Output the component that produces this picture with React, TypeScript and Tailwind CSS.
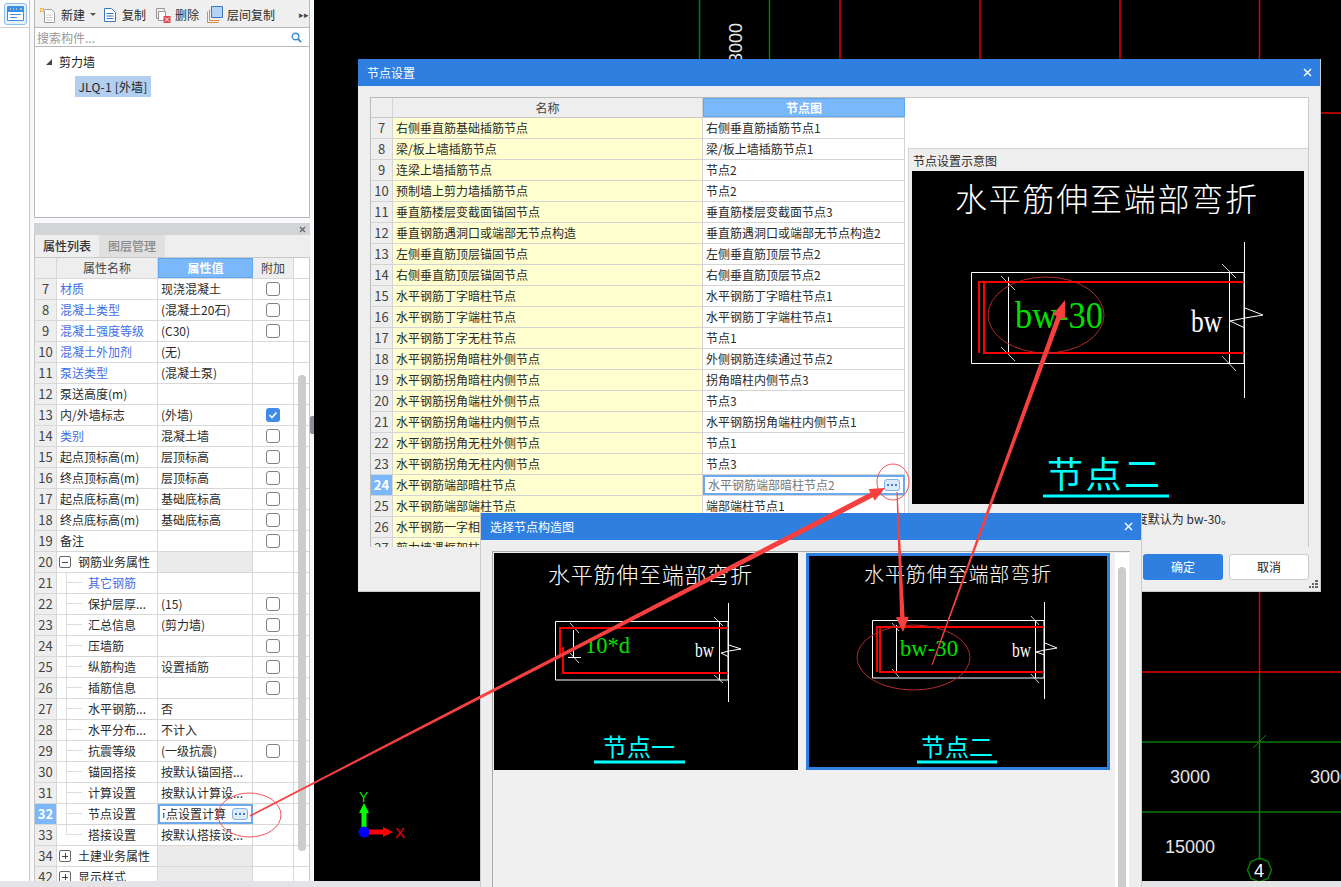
import React from "react";

const UI_FONT = "font-['Noto_Sans_CJK_SC','Liberation_Sans',sans-serif]";

type PropRow = {
  no: number;
  name: string;
  value?: string;
  blue?: boolean;
  check?: boolean;
  checked?: boolean;
  group?: "open" | "closed";
  child?: boolean;
  last?: boolean;
};

const PROP_ROWS: PropRow[] = [
  { no: 7, name: "材质", value: "现浇混凝土", blue: true, check: true },
  { no: 8, name: "混凝土类型", value: "(混凝土20石)", blue: true, check: true },
  { no: 9, name: "混凝土强度等级", value: "(C30)", blue: true, check: true },
  { no: 10, name: "混凝土外加剂", value: "(无)", blue: true },
  { no: 11, name: "泵送类型", value: "(混凝土泵)", blue: true },
  { no: 12, name: "泵送高度(m)" },
  { no: 13, name: "内/外墙标志", value: "(外墙)", check: true, checked: true },
  { no: 14, name: "类别", value: "混凝土墙", blue: true, check: true },
  { no: 15, name: "起点顶标高(m)", value: "层顶标高", check: true },
  { no: 16, name: "终点顶标高(m)", value: "层顶标高", check: true },
  { no: 17, name: "起点底标高(m)", value: "基础底标高", check: true },
  { no: 18, name: "终点底标高(m)", value: "基础底标高", check: true },
  { no: 19, name: "备注", check: true },
  { no: 20, name: "钢筋业务属性", group: "open" },
  { no: 21, name: "其它钢筋", blue: true, child: true },
  { no: 22, name: "保护层厚...", value: "(15)", child: true, check: true },
  { no: 23, name: "汇总信息", value: "(剪力墙)", child: true, check: true },
  { no: 24, name: "压墙筋", child: true, check: true },
  { no: 25, name: "纵筋构造", value: "设置插筋", child: true, check: true },
  { no: 26, name: "插筋信息", child: true, check: true },
  { no: 27, name: "水平钢筋...", value: "否", child: true },
  { no: 28, name: "水平分布...", value: "不计入", child: true },
  { no: 29, name: "抗震等级", value: "(一级抗震)", child: true, check: true },
  { no: 30, name: "锚固搭接", value: "按默认锚固搭...", child: true },
  { no: 31, name: "计算设置", value: "按默认计算设...", child: true },
  { no: 32, name: "节点设置", value: "节点设置计算", child: true },
  { no: 33, name: "搭接设置", value: "按默认搭接设...", child: true, last: true },
  { no: 34, name: "土建业务属性", group: "closed" },
  { no: 42, name: "显示样式", group: "closed" },
];

const NODE_ROWS: [number, string, string][] = [
  [7, "右侧垂直筋基础插筋节点", "右侧垂直筋插筋节点1"],
  [8, "梁/板上墙插筋节点", "梁/板上墙插筋节点1"],
  [9, "连梁上墙插筋节点", "节点2"],
  [10, "预制墙上剪力墙插筋节点", "节点2"],
  [11, "垂直筋楼层变截面锚固节点", "垂直筋楼层变截面节点3"],
  [12, "垂直钢筋遇洞口或端部无节点构造", "垂直筋遇洞口或端部无节点构造2"],
  [13, "左侧垂直筋顶层锚固节点", "左侧垂直筋顶层节点2"],
  [14, "右侧垂直筋顶层锚固节点", "右侧垂直筋顶层节点2"],
  [15, "水平钢筋丁字暗柱节点", "水平钢筋丁字暗柱节点1"],
  [16, "水平钢筋丁字端柱节点", "水平钢筋丁字端柱节点1"],
  [17, "水平钢筋丁字无柱节点", "节点1"],
  [18, "水平钢筋拐角暗柱外侧节点", "外侧钢筋连续通过节点2"],
  [19, "水平钢筋拐角暗柱内侧节点", "拐角暗柱内侧节点3"],
  [20, "水平钢筋拐角端柱外侧节点", "节点3"],
  [21, "水平钢筋拐角端柱内侧节点", "水平钢筋拐角端柱内侧节点1"],
  [22, "水平钢筋拐角无柱外侧节点", "节点1"],
  [23, "水平钢筋拐角无柱内侧节点", "节点3"],
  [24, "水平钢筋端部暗柱节点", "水平钢筋端部暗柱节点2"],
  [25, "水平钢筋端部端柱节点", "端部端柱节点1"],
  [26, "水平钢筋一字相交节点", "节点1"],
  [27, "剪力墙遇框架柱节点", "节点1"],
];

const DotsButton = () => (
  <span className="flex h-[12px] w-[16px] shrink-0 items-center justify-center gap-[2px] rounded-[3px] border border-[#7fb2ea] bg-[#dceafa]">
    <span className="h-[2px] w-[2px] bg-[#3a7fd5]" />
    <span className="h-[2px] w-[2px] bg-[#3a7fd5]" />
    <span className="h-[2px] w-[2px] bg-[#3a7fd5]" />
  </span>
);

const CloseX = () => (
  <svg width="9" height="9" viewBox="0 0 9 9" className="shrink-0">
    <path d="M1 1l7 7M8 1l-7 7" stroke="#fff" strokeWidth="1.4" />
  </svg>
);

const Checkbox = ({ checked }: { checked?: boolean }) =>
  checked ? (
    <span className="flex h-[14px] w-[14px] items-center justify-center rounded-[3px] bg-[#3f8be6]">
      <svg width="10" height="10" viewBox="0 0 10 10">
        <path d="M1.5 5l2.5 2.5L8.5 2.5" fill="none" stroke="#fff" strokeWidth="1.6" />
      </svg>
    </span>
  ) : (
    <span className="h-[14px] w-[14px] rounded-[3px] border border-[#808080] bg-white" />
  );

const PropertyRow = ({ row }: { row: PropRow }) => {
  const selected = row.no === 32;
  return (
    <div className="flex h-[21px] shrink-0 border-b border-[#d8d8d8]">
      <div
        className={
          selected
            ? "flex w-[22px] shrink-0 items-center justify-center border-r border-[#d8d8d8] bg-[#7ab8fb] text-[13px] font-bold text-white"
            : "flex w-[22px] shrink-0 items-center justify-center border-r border-[#d8d8d8] bg-[#eeeeee] text-[13px] text-[#444]"
        }
      >
        {row.no}
      </div>
      <div className="flex w-[101px] shrink-0 items-center overflow-hidden border-r border-[#d8d8d8] bg-white">
        {row.group && (
          <span className="ml-[2px] mr-[7px] flex h-[12px] w-[12px] shrink-0 items-center justify-center rounded-[2px] border border-[#666]">
            <span className="relative block h-px w-[6px] bg-[#444]">
              {row.group === "closed" && (
                <span className="absolute left-[2.5px] top-[-2.5px] block h-[6px] w-px bg-[#444]" />
              )}
            </span>
          </span>
        )}
        {row.child && (
          <span className="ml-[9px] mr-[6px] flex h-full w-[16px] shrink-0 flex-col">
            <span className="h-1/2 border-b border-l border-[#dddddd]" />
            {!row.last && <span className="h-1/2 border-l border-[#dddddd]" />}
          </span>
        )}
        <span
          className={
            (row.group || row.child ? "" : "ml-[3px] ") +
            "whitespace-nowrap " +
            (row.blue ? "text-[#3f6fe8]" : "text-[#2a2a2a]")
          }
        >
          {row.name}
        </span>
      </div>
      {selected ? (
        <div className="flex w-[95px] shrink-0 items-center border-2 border-[#6caaf0] bg-white pl-[3px] pr-[3px]">
          <div className="flex min-w-0 flex-1 justify-end overflow-hidden pr-[6px]">
            <span className="shrink-0 whitespace-nowrap text-[#2a2a2a]">{row.value}</span>
          </div>
          <DotsButton />
        </div>
      ) : (
        <div
          className={
            "flex w-[95px] shrink-0 items-center overflow-hidden whitespace-nowrap border-r border-[#d8d8d8] pl-[3px] text-[#2a2a2a] " +
            (row.group ? "bg-[#ebebeb]" : "bg-white")
          }
        >
          {row.value}
        </div>
      )}
      <div className="flex w-[41px] shrink-0 items-center justify-center border-r border-[#d8d8d8] bg-white">
        {row.check && <Checkbox checked={row.checked} />}
      </div>
    </div>
  );
};

const ToolbarIcons = {
  add: (
    <svg width="16" height="16" viewBox="0 0 16 16">
      <path d="M4.5 2.5h7l3 3v10h-10z" fill="#fff" stroke="#9a9a9a" />
      <path d="M6.5 8h6M6.5 10.5h6M6.5 13h6" stroke="#c8c8c8" />
      <path d="M0 1h4v4H0z" fill="#f5a623" />
      <path d="M2 0v6M0 3h5" stroke="#fff" strokeWidth=".7" />
    </svg>
  ),
  copy: (
    <svg width="14" height="16" viewBox="0 0 14 16">
      <path d="M1.5 1.5h7l4 4v9h-11z" fill="#fff" stroke="#3a76bb" />
      <path d="M3.5 6.5h7M3.5 9h7M3.5 11.5h7" stroke="#3a76bb" />
    </svg>
  ),
  remove: (
    <svg width="16" height="16" viewBox="0 0 16 16">
      <path d="M1.5 1.5h8v2" fill="none" stroke="#999" />
      <path d="M1.5 1.5v10h2" fill="none" stroke="#999" />
      <path d="M3.5 4.5h7v9h-7z" fill="#fff" stroke="#999" />
      <path d="M8.5 9h7v7h-7z" fill="#e0474c" />
      <path d="M10 10.5l4 4M14 10.5l-4 4" stroke="#fff" />
    </svg>
  ),
  floor: (
    <svg width="16" height="17" viewBox="0 0 16 17">
      <path d="M.5 5.5v11h11" fill="none" stroke="#e08a3c" />
      <path d="M2.5 3.5v11h10" fill="none" stroke="#e08a3c" />
      <path d="M4.5.5h11v11h-11z" fill="#b4d2f3" stroke="#3a76bb" />
    </svg>
  ),
};

const Sidebar = () => (
  <aside className={`relative flex h-full w-[314px] shrink-0 bg-[#f8f9fa] text-[12px] ${UI_FONT}`}>
    {/* tab strip */}
    <div className="flex h-full w-[30px] shrink-0 flex-col border-r border-[#c8c8c8] bg-white">
      <div className="flex h-[28px] items-center justify-center border-b border-[#d0d0d0] pl-[1px]">
        <div className="flex h-[22px] w-[23px] items-center justify-center rounded-[3px] border border-[#8dbdf2] bg-[#e4f0fc]">
          <svg width="17" height="15" viewBox="0 0 17 15">
            <path d="M.5.5h16v14H.5z" fill="#fff" stroke="#3f8fe0" />
            <path d="M1 1h15v5H1z" fill="#3f8fe0" />
            <path d="M3 3h1M6 3h1M9 3h1M13 3h2" stroke="#fff" />
            <path d="M3 8.5h11M3 11.5h7" stroke="#3f8fe0" />
          </svg>
        </div>
      </div>
    </div>

    <div className="flex h-full w-[284px] flex-col pl-[4px] pr-[4px]">
      {/* list panel */}
      <div className="flex h-[28px] shrink-0 items-center border-x border-b border-[#b8b8b8] bg-[#efefef] pl-[5px] pt-[2px] text-[#2a2a2a]">
        <span className="mr-[5px]">{ToolbarIcons.add}</span>
        <span>新建</span>
        <span className="ml-[5px] mr-[7px] h-0 w-0 border-x-[3px] border-t-[3px] border-x-transparent border-t-[#555]" />
        <span className="mr-[5px]">{ToolbarIcons.copy}</span>
        <span className="mr-[9px]">复制</span>
        <span className="mr-[4px]">{ToolbarIcons.remove}</span>
        <span className="mr-[8px]">删除</span>
        <span className="mr-[4px]">{ToolbarIcons.floor}</span>
        <span>层间复制</span>
        <span className="ml-[24px] text-[9px] leading-none text-[#444]">▸▸</span>
      </div>
      <div className="flex h-[19px] shrink-0 items-center justify-between border-x border-b border-[#b8b8b8] bg-white pl-[2px] pr-[7px] pt-[1px] text-[#999]">
        <span>搜索构件...</span>
        <svg width="11" height="11" viewBox="0 0 11 11">
          <circle cx="4.5" cy="4.5" r="3.3" fill="none" stroke="#3a8fd0" strokeWidth="1.4" />
          <path d="M7 7l3.2 3.2" stroke="#3a8fd0" strokeWidth="1.8" />
        </svg>
      </div>
      <div className="flex h-[171px] shrink-0 flex-col border-x border-b border-[#b8b8b8] bg-white pl-[11px] pt-[6px] text-[#222]">
        <div className="flex h-[18px] items-center">
          <span className="mr-[7px] h-0 w-0 border-b-[6px] border-l-[6px] border-b-[#444] border-l-transparent" />
          <span>剪力墙</span>
        </div>
        <div className="ml-[29px] mt-[5px] flex h-[21px] w-[76px] items-center justify-center bg-[#b3cff0] whitespace-nowrap tracking-[0.2px]">
          JLQ-1 [外墙]
        </div>
      </div>

      {/* properties panel */}
      <div className="mt-[5px] flex h-[12px] shrink-0 items-center justify-end bg-[#d2d4d8] pr-[4px]">
        <svg width="7" height="7" viewBox="0 0 7 7">
          <path d="M1 1l5 5M6 1L1 6" stroke="#666" strokeWidth="1.3" />
        </svg>
      </div>
      <div className="flex h-[22px] shrink-0 items-stretch border-l border-[#c0c0c0] bg-[#eeeeee]">
        <div className="flex w-[64px] items-center justify-center font-medium text-[#333]">属性列表</div>
        <div className="flex w-[66px] items-center justify-center bg-[#e0e0e0] font-medium text-[#8a8a8a]">图层管理</div>
      </div>
      <div className="relative flex min-h-0 flex-1 flex-col overflow-hidden border-x border-t border-[#c8c8c8] bg-white">
        <div className="flex h-[21px] shrink-0 border-b border-[#d8d8d8] text-[#444]">
          <div className="w-[22px] shrink-0 border-r border-[#d8d8d8] bg-[#eeeeee]" />
          <div className="flex w-[101px] shrink-0 items-center justify-center border-r border-[#d8d8d8] bg-[#eeeeee]">属性名称</div>
          <div className="flex w-[95px] shrink-0 items-center justify-center border border-[#5ea5f2] bg-[#7ab8fb] font-bold text-white">属性值</div>
          <div className="flex w-[41px] shrink-0 items-center justify-center border-r border-[#d8d8d8] bg-[#eeeeee]">附加</div>
        </div>
        {PROP_ROWS.map((row) => (
          <PropertyRow key={row.no} row={row} />
        ))}
        {/* scrollbar */}
        <div className="absolute right-[3px] top-[117px] h-[476px] w-[8px] rounded-[4px] bg-[#cccccc]" />
      </div>
    </div>

    {/* splitter handle */}
    <div className="absolute left-[310px] top-[416px] h-[18px] w-[4px] rounded-l-[2px] bg-[#8a8f96]" />
  </aside>
);

const CanvasLines = () => (
  <svg className="block h-full w-full" viewBox="314 0 1027 881">
    <g stroke="#0a7a0a" strokeWidth="1.5">
      <path d="M699.5 0V100M769.5 0V100" />
      <path d="M1142 742H1341M1142 812H1341M1259.5 672V860" />
      <path d="M1253 748L1266 735" strokeWidth="1" />
      <path d="M1259.5 858l8.5 3.5 3.5 8.5-3.5 8.5-8.5 3.5-8.5-3.5-3.5-8.5 3.5-8.5z" fill="none" />
    </g>
    <g stroke="#e00000" strokeWidth="1.5">
      <path d="M840 0V100M980 0V100M1120 0V100M1259.5 0V672" />
      <path d="M1321 113H1341M1142 672H1341" />
    </g>
    <g fill="#e6e6e6" fontSize="18" fontFamily="'Liberation Sans',sans-serif">
      <text x="742" y="63" transform="rotate(-90 742 63)">3000</text>
      <text x="1170" y="783">3000</text>
      <text x="1310" y="783">3000</text>
      <text x="1165" y="853">15000</text>
      <text x="1254" y="877" fill="#fff">4</text>
    </g>
    {/* axis gizmo */}
    <path d="M361.5 832V813H359L364 803L369 813H366.5V832Z" fill="#00ff00" />
    <path d="M364 829.5H383V827L393 832L383 837V834.5H364Z" fill="#ff0000" />
    <circle cx="364" cy="832" r="5.5" fill="#0000ff" />
    <text x="359" y="802" fill="#00e000" fontSize="14" fontFamily="'Liberation Sans',sans-serif">Y</text>
    <text x="395" y="838" fill="#ff0000" fontSize="15" fontFamily="'Liberation Sans',sans-serif">X</text>
  </svg>
);

const CJK = "'Noto Sans CJK SC',sans-serif";
const SERIF = "'Liberation Serif',serif";

const BigDiagram = () => (
  <svg className="block h-[333px] w-[392px] bg-black" viewBox="912 171 392 333">
    <text x="955" y="211" fill="#fff" fontSize="32" fontFamily={CJK} fontWeight="300" textLength="302">水平筋伸至端部弯折</text>
    <g stroke="#fff" fill="none">
      <path d="M971.5 272.5H1244V363.5H971.5Z" />
      <path d="M1244.5 242V398M1229.5 272V364M1008.5 277V353" />
      <path d="M1222 264L1236 278M1222 356L1236 371M1001 276L1015 290M1001 347L1015 361" strokeWidth=".8" />
      <path d="M1245 308L1263 315L1245 318L1230 321L1245 328" />
    </g>
    <path d="M979 353V282H1244M1244 353H984V282" fill="none" stroke="#ff0000" strokeWidth="2" />
    <text x="1015" y="328" fill="#00e000" fontSize="37" fontFamily={SERIF} textLength="88" lengthAdjust="spacingAndGlyphs">bw-30</text>
    <text x="1191" y="332" fill="#fff" fontSize="32" fontFamily={SERIF} textLength="31" lengthAdjust="spacingAndGlyphs">bw</text>
    <text x="1047" y="488" fill="#00ffff" fontSize="36" fontFamily={CJK} textLength="113">节点二</text>
    <path d="M1043 496H1169" stroke="#00ffff" strokeWidth="3" />
  </svg>
);

const NodeOne = () => (
  <svg className="block h-[217px] w-[304px] bg-black" viewBox="494 553 304 217">
    <text x="548" y="583" fill="#fff" fontSize="22" fontFamily={CJK} fontWeight="300" textLength="204">水平筋伸至端部弯折</text>
    <g stroke="#fff" fill="none">
      <path d="M555.5 621.5H728V680H555.5Z" />
      <path d="M728.5 603V702M719.5 621V680M573.5 630V657M568 657.5H581" />
      <path d="M570 623L579 633M570 653L579 663M714 617L723 626M714 675L723 683" strokeWidth=".8" />
      <path d="M729 645L741 649L729 651L721 653L729 657" />
    </g>
    <path d="M728 628H560V657M563 647V673H728" fill="none" stroke="#ff0000" strokeWidth="2" />
    <text x="585" y="653" fill="#00e000" fontSize="24" fontFamily={SERIF} textLength="45" lengthAdjust="spacingAndGlyphs">10*d</text>
    <text x="695" y="657" fill="#fff" fontSize="20" fontFamily={SERIF} textLength="19" lengthAdjust="spacingAndGlyphs">bw</text>
    <text x="603" y="756" fill="#00ffff" fontSize="24" fontFamily={CJK} textLength="72">节点一</text>
    <path d="M594 762H685" stroke="#00ffff" strokeWidth="3" />
  </svg>
);

const NodeTwo = () => (
  <svg className="block h-full w-full bg-black" viewBox="809 556 298 211">
    <text x="864" y="582" fill="#fff" fontSize="20" fontFamily={CJK} fontWeight="300" textLength="187">水平筋伸至端部弯折</text>
    <g stroke="#fff" fill="none">
      <path d="M872.5 620.5H1044V678H872.5Z" />
      <path d="M1044.5 602V699M1035.5 620V678M896.5 625V673" />
      <path d="M1031 616L1039 625M1031 674L1039 683M892 623L899 631M892 669L899 677" strokeWidth=".8" />
      <path d="M1045 643L1057 648L1045 650L1036 652L1045 655" />
    </g>
    <path d="M1044 627H877V672M880 627V672H1044" fill="none" stroke="#ff0000" strokeWidth="2" />
    <text x="900" y="656" fill="#00e000" fontSize="24" fontFamily={SERIF} textLength="58" lengthAdjust="spacingAndGlyphs">bw-30</text>
    <text x="1012" y="657" fill="#fff" fontSize="20" fontFamily={SERIF} textLength="19" lengthAdjust="spacingAndGlyphs">bw</text>
    <text x="921" y="756" fill="#00ffff" fontSize="24" fontFamily={CJK} textLength="72">节点二</text>
    <path d="M917 762H997" stroke="#00ffff" strokeWidth="3" />
  </svg>
);

const NodeRow = ({ no, name, value }: { no: number; name: string; value: string }) => {
  const selected = no === 24;
  return (
    <div className="flex h-[21px] shrink-0 border-b border-[#d4d4d4]">
      <div
        className={
          selected
            ? "flex w-[22px] shrink-0 items-center justify-center border-r border-[#d4d4d4] bg-[#7ab8fb] text-[13px] font-bold text-white"
            : "flex w-[22px] shrink-0 items-center justify-center border-r border-[#d4d4d4] bg-[#eeeeee] text-[13px] text-[#444]"
        }
      >
        {no}
      </div>
      <div className="flex w-[310px] shrink-0 items-center border-r border-[#d4d4d4] bg-[#ffffcf] pl-[3px] text-[#2a2a2a]">
        {name}
      </div>
      {selected ? (
        <div className="flex w-[202px] shrink-0 items-center justify-between border-2 border-[#6caaf0] bg-white pl-[3px] pr-[3px] text-[#777]">
          <span>{value}</span>
          <DotsButton />
        </div>
      ) : (
        <div className="flex w-[202px] shrink-0 items-center border-r border-[#d4d4d4] bg-white pl-[3px] text-[#2a2a2a]">
          {value}
        </div>
      )}
    </div>
  );
};

const NodeSettingsDialog = () => (
  <div className={`absolute left-[358px] top-[59px] flex h-[533px] w-[963px] flex-col border-b border-r border-[#c8ccd2] bg-[#eeeeee] text-[12px] ${UI_FONT}`}>
    <div className="flex h-[27px] shrink-0 items-center justify-between bg-[#2f7fe1] pl-[9px] pr-[8px] text-white">
      <span>节点设置</span>
      <CloseX />
    </div>
    <div className="flex h-[461px] shrink-0 pl-[12px] pt-[11px]">
      <div className="flex h-[450px] w-[535px] shrink-0 flex-col overflow-hidden border-l border-t border-[#bbbbbb] bg-white">
        <div className="flex h-[20px] shrink-0 border-b border-[#c8c8c8] text-[#444]">
          <div className="w-[22px] shrink-0 border-r border-[#d4d4d4] bg-[#eeeeee]" />
          <div className="flex w-[310px] shrink-0 items-center justify-center border-r border-[#d4d4d4] bg-[#eeeeee]">名称</div>
          <div className="flex w-[202px] shrink-0 items-center justify-center border border-[#5ea5f2] bg-[#7ab8fb] font-bold text-white">节点图</div>
        </div>
        {NODE_ROWS.map(([no, name, value]) => (
          <NodeRow key={no} no={no} name={name} value={value} />
        ))}
      </div>
      <div className="flex h-[450px] w-[404px] shrink-0 flex-col border-r border-t border-[#c8c8c8] bg-white">
        <div className="h-[50px] shrink-0" />
        <div className="ml-[3px] flex h-[400px] flex-col border-l border-t border-[#d4d4d4] bg-[#eeeeee] text-[#2a2a2a]">
          <div className="flex h-[22px] shrink-0 items-end pb-[1px] pl-[4px]">节点设置示意图</div>
          <div className="pl-[3px]">
            <BigDiagram />
          </div>
          <div className="mt-[6px] w-[324px] whitespace-nowrap text-right">水平筋伸至端部弯折，弯折长度默认为 bw-30。</div>
        </div>
      </div>
    </div>
    <div className="flex justify-end gap-[6px] pr-[11px] pt-[7px]">
      <button className="h-[26px] w-[80px] rounded-[3px] bg-[#2f7fe1] text-white">确定</button>
      <button className="h-[26px] w-[80px] rounded-[3px] border border-[#cccccc] bg-white text-[#222]">取消</button>
    </div>
    {/* resize grip */}
    <svg className="absolute bottom-[2px] right-[2px]" width="9" height="9" viewBox="0 0 9 9">
      <path d="M6 0h3v2H6zM3 3h2v2H3zM6 3h3v2H6zM0 6h2v2H0zM3 6h2v2H3zM6 6h3v2H6z" fill="#666" />
    </svg>
  </div>
);

const PickNodeDialog = () => (
  <div className={`absolute left-[480px] top-[513px] flex h-[374px] w-[662px] flex-col border-x border-[#c8ccd2] bg-[#eeeeee] text-[12px] ${UI_FONT}`}>
    <div className="flex h-[27px] shrink-0 items-center justify-between bg-[#2f7fe1] pl-[9px] pr-[8px] text-white">
      <span>选择节点构造图</span>
      <CloseX />
    </div>
    <div className="min-h-0 flex-1 pl-[11px] pt-[11px]">
      <div className="flex h-full w-[638px] border-l border-t border-[#aaaaaa] bg-[#f0f0f0] pl-[1px] pt-[1px]">
        <div className="shrink-0">
          <NodeOne />
        </div>
        <div className="ml-[8px] h-[217px] w-[304px] shrink-0 border-[3px] border-[#2f7fe1]">
          <NodeTwo />
        </div>
        <div className="ml-[5px] flex h-full w-[14px] shrink-0 justify-center bg-white pt-[14px]">
          <div className="h-full w-[8px] rounded-t-[4px] bg-[#cccccc]" />
        </div>
      </div>
    </div>
  </div>
);

const TaperedArrow = ({
  from,
  to,
  start = 1,
  end = 4,
  headLen = 15,
  headWidth = 13,
}: {
  from: [number, number];
  to: [number, number];
  start?: number;
  end?: number;
  headLen?: number;
  headWidth?: number;
}) => {
  const dx = to[0] - from[0];
  const dy = to[1] - from[1];
  const len = Math.hypot(dx, dy);
  const ux = dx / len;
  const uy = dy / len;
  const nx = -uy;
  const ny = ux;
  const bx = to[0] - ux * headLen;
  const by = to[1] - uy * headLen;
  const pts: [number, number][] = [
    [from[0] + (nx * start) / 2, from[1] + (ny * start) / 2],
    [bx + (nx * end) / 2, by + (ny * end) / 2],
    [bx + (nx * headWidth) / 2, by + (ny * headWidth) / 2],
    to,
    [bx - (nx * headWidth) / 2, by - (ny * headWidth) / 2],
    [bx - (nx * end) / 2, by - (ny * end) / 2],
    [from[0] - (nx * start) / 2, from[1] - (ny * start) / 2],
  ];
  return <polygon points={pts.map((p) => p.join(",")).join(" ")} fill="#f6403f" />;
};

const Annotations = () => (
  <svg className="pointer-events-none absolute left-0 top-0 h-[887px] w-[1341px]" viewBox="0 0 1341 887">
    <g fill="none">
      <ellipse cx="249.5" cy="815" rx="31.5" ry="22" stroke="#f0555a" />
      <ellipse cx="893" cy="482" rx="16" ry="18" stroke="#f0555a" />
      <ellipse cx="1046" cy="315" rx="58" ry="38" stroke="#b52a2a" />
      <ellipse cx="913.5" cy="657.5" rx="56.5" ry="32.5" stroke="#b52a2a" />
    </g>
    <TaperedArrow from={[250, 816]} to={[885, 488]} start={1.5} end={5.5} />
    <TaperedArrow from={[897, 492]} to={[903, 632]} start={1} end={4.5} />
    <TaperedArrow from={[932, 665]} to={[1065, 300]} start={1} end={5} headLen={18} />
  </svg>
);

export default function App() {
  return (
    <div className="relative flex h-[887px] w-[1341px] flex-col overflow-hidden">
      <div className="flex h-[881px] shrink-0">
        <Sidebar />
        <main className="min-w-0 flex-1 bg-black">
          <CanvasLines />
        </main>
      </div>
      <div className="h-[6px] shrink-0 bg-[#e4e4e6]" />
      <NodeSettingsDialog />
      <PickNodeDialog />
      <Annotations />
    </div>
  );
}
